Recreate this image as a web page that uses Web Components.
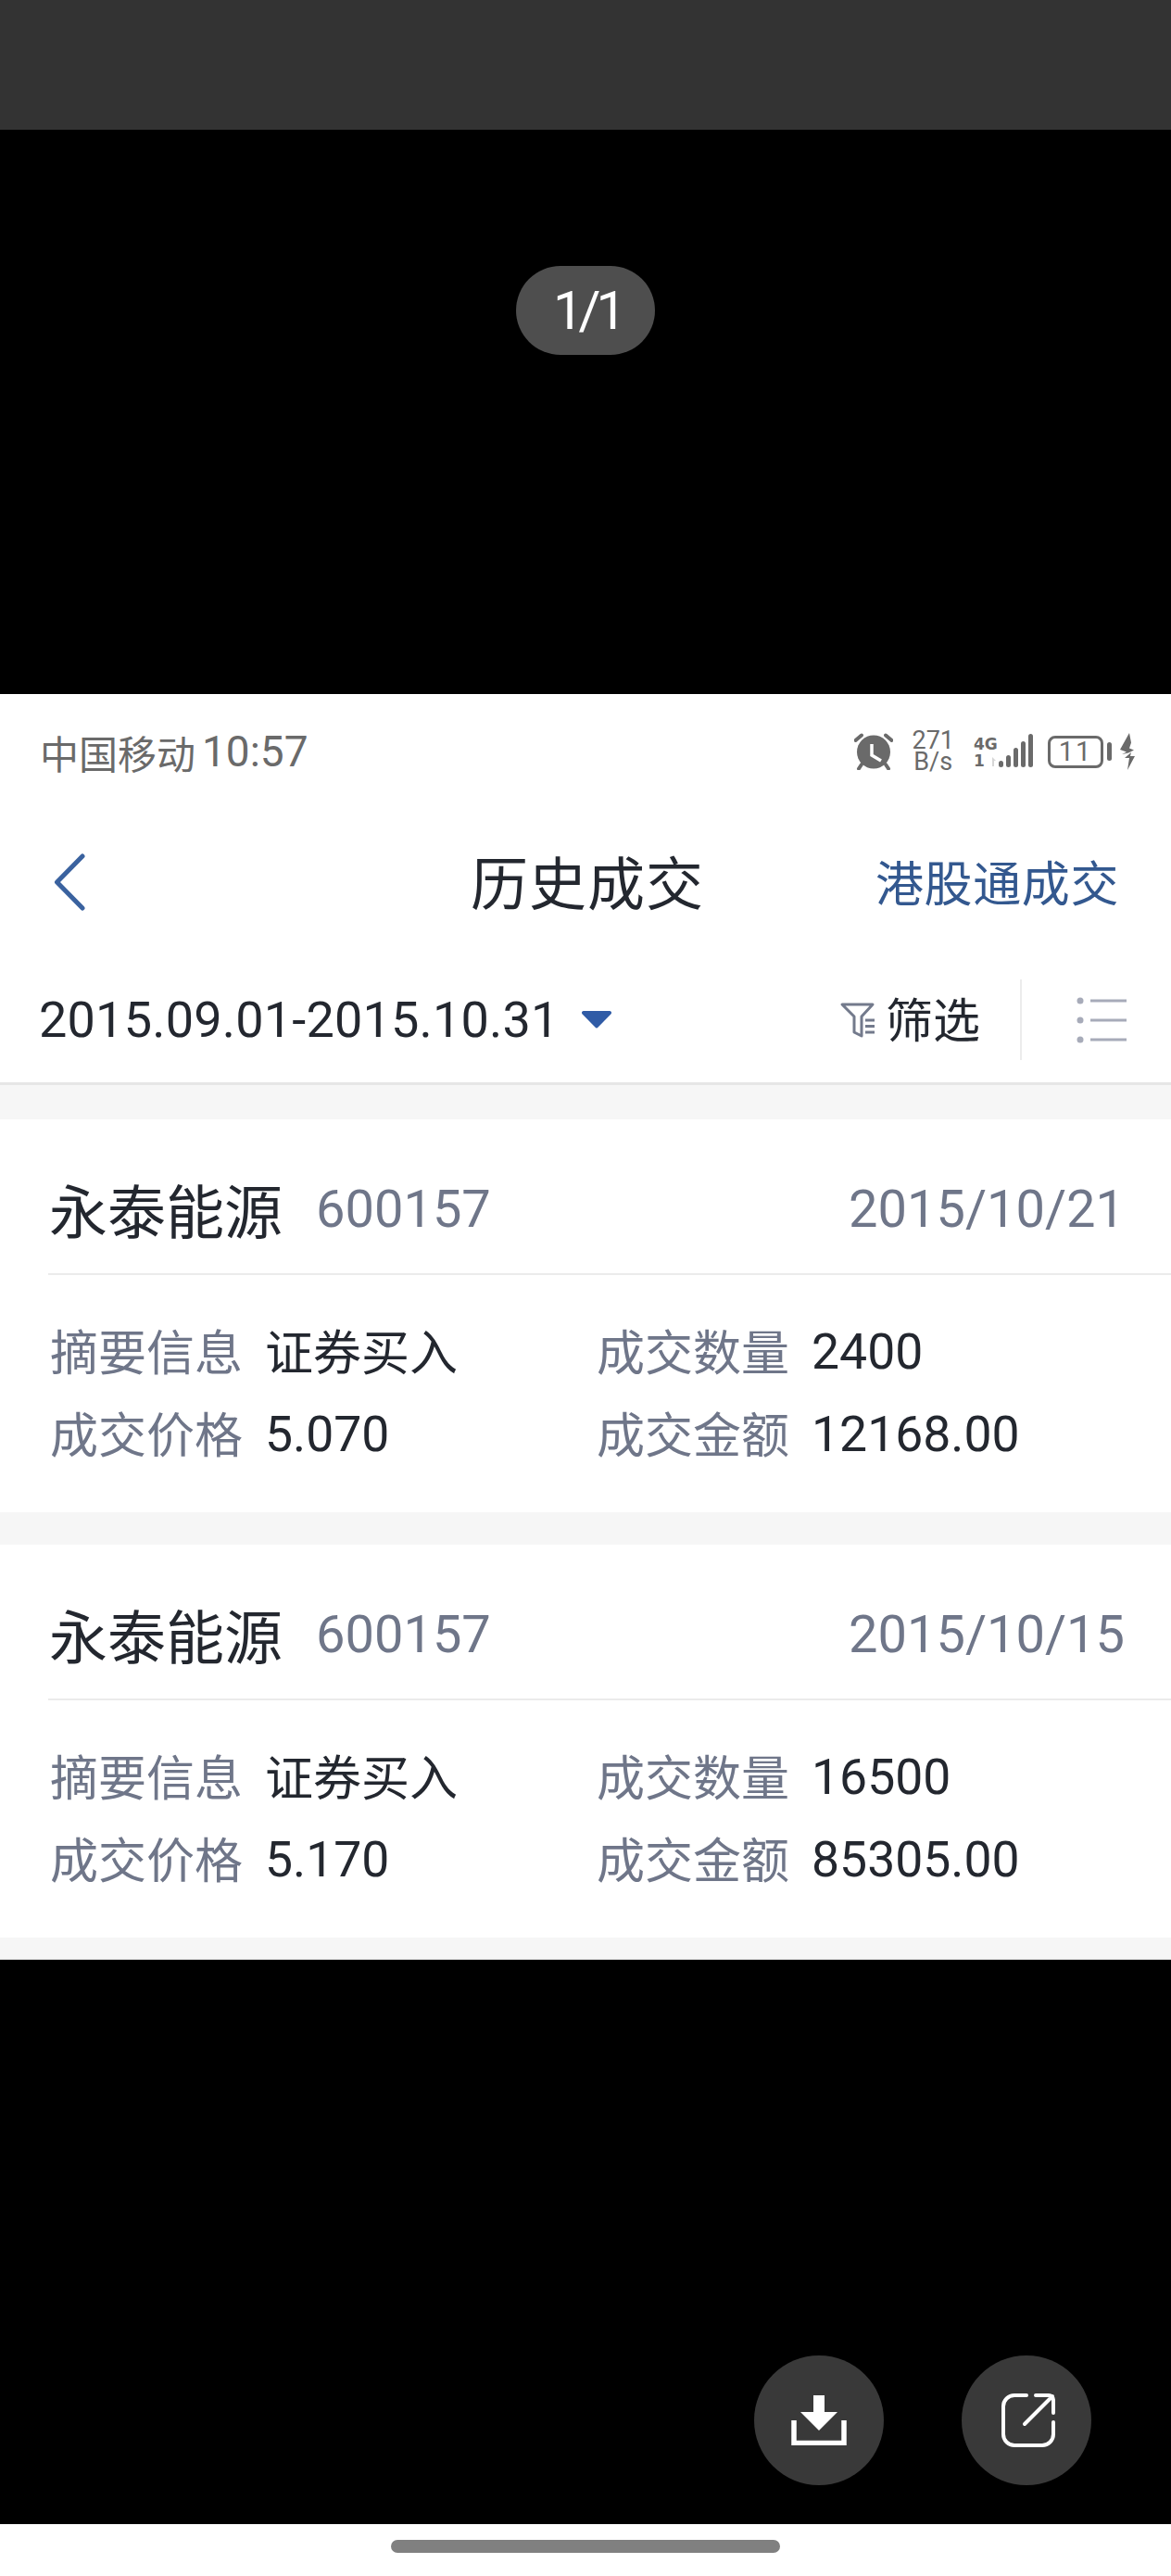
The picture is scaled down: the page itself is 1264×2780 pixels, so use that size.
<!DOCTYPE html>
<html lang="zh">
<head>
<meta charset="utf-8">
<title>历史成交</title>
<style>
    html, body { margin:0; padding:0; background:#000; }
    body { width:1264px; height:2780px; overflow:hidden; font-family:Roboto, "Noto Sans CJK SC", sans-serif; }
</style>
</head>
<body>
<photo-viewer>
    <page-badge slot="top">1/1</page-badge>
    <status-bar slot="shot"></status-bar>
    <nav-bar slot="shot" title="历史成交" action="港股通成交"></nav-bar>
    <filter-bar slot="shot" range="2015.09.01-2015.10.31"></filter-bar>
    <trade-card slot="shot" style="margin-top:37px" name="永泰能源" code="600157" date="2015/10/21" summary="证券买入" qty="2400" price="5.070" amount="12168.00"></trade-card>
    <trade-card slot="shot" style="margin-top:35px" name="永泰能源" code="600157" date="2015/10/15" summary="证券买入" qty="16500" price="5.170" amount="85305.00"></trade-card>
    <round-button slot="actions" icon="download"></round-button>
    <round-button slot="actions" icon="share"></round-button>
</photo-viewer>

<script>
const FONT = 'Roboto, "Noto Sans CJK SC", sans-serif';

class PhotoViewer extends HTMLElement {
    constructor() {
        super();
        this.attachShadow({ mode: "open" }).innerHTML = `
<style>
    :host { display:flex; flex-direction:column; width:1264px; height:2780px; background:#000; font-family:${FONT}; }
    .strip { height:140px; background:#333; }
    .top { height:609px; display:flex; justify-content:center; align-items:flex-start; padding-top:147px; box-sizing:border-box; }
    .shot { height:1366px; background:#f6f6f6; border-bottom:1px solid #ddd; box-sizing:border-box; display:flex; flex-direction:column; }
    .bottom { height:609px; display:flex; justify-content:flex-end; gap:84px; padding:427px 86px 0 0; box-sizing:border-box; }
    .home { flex:1; background:#fff; display:flex; justify-content:center; padding-top:17px; }
    .home i { display:block; width:420px; height:14px; border-radius:7px; background:#808080; }
</style>
<div class="strip"></div>
<div class="top"><slot name="top"></slot></div>
<div class="shot"><slot name="shot"></slot></div>
<div class="bottom"><slot name="actions"></slot></div>
<div class="home"><i></i></div>`;
    }
}

class PageBadge extends HTMLElement {
    constructor() {
        super();
        this.attachShadow({ mode: "open" }).innerHTML = `
<style>
    :host { display:flex; align-items:center; justify-content:center; width:150px; height:96px; padding-left:4px; box-sizing:border-box; border-radius:48px; background:#4e4e4e; color:#fff; font-size:58px; letter-spacing:-5px; }
</style>
<slot></slot>`;
    }
}

class StatusBar extends HTMLElement {
    constructor() {
        super();
        this.attachShadow({ mode: "open" }).innerHTML = `
<style>
    :host { display:flex; align-items:center; justify-content:space-between; height:124px; padding:0 38px 0 43px; box-sizing:border-box; background:#fff; color:#6a6a6a; }
    .left { font-size:42px; display:flex; align-items:center; gap:7px; }
    .left b { font-weight:400; font-size:46px; }
    .right { display:flex; align-items:center; height:48px; }
    .speed { width:min-content; text-align:center; font-size:27px; line-height:23px; margin:0 21px 0 20px; }
    .net { display:flex; flex-direction:column; font-family:"DejaVu Sans", sans-serif; font-weight:700; line-height:18px; font-size:17px; width:22px; margin-top:2px; }
    .batt { display:flex; align-items:center; justify-content:center; width:60px; height:35px; margin-left:16px; border:3px solid #6a6a6a; border-radius:8px; box-sizing:border-box; font-size:29px; letter-spacing:2px; }
</style>
<div class="left">中国移动<b>10:57</b></div>
<div class="right">
    <svg width="42" height="40" viewBox="0 0 42 40">
        <circle cx="21" cy="20.500" r="18" fill="#6a6a6a"/>
        <path d="M1.500 8 8 2.500M40.500 8 34 2.500M8 34l-3 4.500M34 34l3 4.500" stroke="#6a6a6a" stroke-width="4" stroke-linecap="round"/>
        <path d="M19 12v12l10 6" fill="none" stroke="#fff" stroke-width="3.500"/>
    </svg>
    <div class="speed">271 B/s</div>
    <div class="net"><span>4G</span><span>1</span></div>
    <svg width="44" height="38" viewBox="0 0 44 38" style="margin-left:-2px">
        <path d="M0 25l4 4h-2v6H0z" fill="#d6d6d6"/>
        <g fill="#6a6a6a">
            <rect x="7" y="29" width="5" height="7" rx="2.500"/>
            <rect x="15" y="23" width="5" height="13" rx="2.500"/>
            <rect x="23" y="15" width="5" height="21" rx="2.500"/>
            <rect x="31" y="8" width="5" height="28" rx="2.500"/>
            <rect x="39" y="0" width="5" height="36" rx="2.500"/>
        </g>
    </svg>
    <div class="batt">11</div>
    <svg width="6" height="20" viewBox="0 0 6 20" style="margin-left:4px"><rect width="5" height="20" rx="2.500" fill="#6a6a6a"/></svg>
    <svg width="18" height="40" viewBox="0 0 18 40" style="margin-left:7px">
        <path d="M11 0 1 18l7 2.500L3 23l7-1.500 6-3-5-2 2-6zM13 21 6 27h5l-2 13 8-15h-5z" fill="#6a6a6a"/>
    </svg>
</div>`;
    }
}

class NavBar extends HTMLElement {
    constructor() {
        super();
        const root = this.attachShadow({ mode: "open" });
        root.innerHTML = `
<style>
    :host { display:grid; grid-template-columns:1fr auto 1fr; align-items:center; height:160px; padding:0 56px 0 58px; box-sizing:border-box; background:#fff; }
    svg { display:block; margin-top:-2px; }
    h1 { margin:-6px 0 0 2px; font-size:62px; font-weight:400; color:#23272f; letter-spacing:1px; }
    .action { justify-self:end; margin-top:-6px; font-size:52px; letter-spacing:.6px; color:#33588f; }
</style>
<svg width="34" height="62" viewBox="0 0 34 62"><path d="M31 3 3.500 31 31 59" fill="none" stroke="#3a629f" stroke-width="5" stroke-linecap="round" stroke-linejoin="round"/></svg>
<h1></h1>
<div class="action"></div>`;
        root.querySelector("h1").textContent = this.getAttribute("title");
        root.querySelector(".action").textContent = this.getAttribute("action");
    }
}

class FilterBar extends HTMLElement {
    constructor() {
        super();
        const root = this.attachShadow({ mode: "open" });
        root.innerHTML = `
<style>
    :host { display:flex; align-items:center; height:138px; padding:0 48px 0 42px; box-sizing:border-box; background:#fff; border-bottom:3px solid #e6e6e6; color:#23272f; }
    .range { font-size:54px; letter-spacing:.2px; }
    .caret { margin-left:23px; margin-top:-2px; }
    .filter { display:flex; align-items:center; gap:11px; margin-left:auto; font-size:51px; }
    .filter span { margin-top:-6px; }
    .sep { width:2px; height:87px; background:#ececec; margin:0 59px 0 43px; }
    svg { display:block; }
</style>
<span class="range"></span>
<svg class="caret" width="34" height="20" viewBox="0 0 34 20"><path d="M3 1h28a2 2 0 0 1 1.600 3.200L18.600 18.600a2.200 2.200 0 0 1-3.200 0L1.400 4.200A2 2 0 0 1 3 1z" fill="#2f5ba6"/></svg>
<div class="filter">
    <svg width="39" height="40" viewBox="0 0 39 40">
        <path d="M3 3H36L24 16V37L16 33V16z" fill="none" stroke="#737a8c" stroke-width="3" stroke-linejoin="round"/>
        <path d="M28 20h10M28 26.500h10M28 33h10" stroke="#737a8c" stroke-width="3"/>
    </svg>
    <span>筛选</span>
</div>
<div class="sep"></div>
<svg width="54" height="50" viewBox="0 0 54 50">
    <g fill="#a7abb9"><circle cx="4" cy="4" r="3.500"/><circle cx="4" cy="25" r="3.500"/><circle cx="4" cy="46" r="3.500"/></g>
    <path d="M15 4h39M15 25h39M15 46h39" stroke="#a7abb9" stroke-width="3"/>
</svg>`;
        root.querySelector(".range").textContent = this.getAttribute("range");
    }
}

const tradeTemplate = document.createElement("template");
tradeTemplate.innerHTML = `
<style>
    :host { display:block; height:424px; background:#fff; padding-left:52px; box-sizing:border-box; }
    .head { display:flex; align-items:center; height:168px; padding:26px 50px 0 1px; box-sizing:border-box; border-bottom:2px solid #ebebeb; }
    .name { font-size:63px; color:#23272f; margin-top:-2px; }
    .code { font-size:56px; color:#6f7689; margin:2px 0 0 36px; }
    .date { font-size:56px; color:#6f7689; margin:2px 0 0 auto; }
    .grid { display:grid; grid-template-columns:590px 1fr; grid-auto-rows:89px; padding:36px 0 0 2px; align-items:center; }
    .cell { display:flex; align-items:center; gap:24px; font-size:52px; color:#23272f; }
    .cell span { color:#6f7689; }
    .num { font-size:53.500px; padding-top:3px; }
</style>
<div class="head"><span class="name"></span><span class="code"></span><span class="date"></span></div>
<div class="grid">
    <div class="cell"><span>摘要信息</span><div class="summary"></div></div>
    <div class="cell"><span>成交数量</span><div class="num qty"></div></div>
    <div class="cell"><span>成交价格</span><div class="num price"></div></div>
    <div class="cell"><span>成交金额</span><div class="num amount"></div></div>
</div>`;

class TradeCard extends HTMLElement {
    constructor() {
        super();
        const root = this.attachShadow({ mode: "open" });
        root.appendChild(tradeTemplate.content.cloneNode(true));
        for (const key of ["name", "code", "date", "summary", "qty", "price", "amount"]) {
            root.querySelector("." + key).textContent = this.getAttribute(key);
        }
    }
}

const ICONS = {
    download: `<svg width="60" height="54" viewBox="0 0 60 54"><path d="M24 0h12v18h14L30 38 10 18h14z" fill="#fff"/><path d="M3 27v24.500h54V27" fill="none" stroke="#fff" stroke-width="5.500"/></svg>`,
    share: `<svg style="margin-left:3px" width="60" height="60" viewBox="0 0 60 60" fill="none" stroke="#fff" stroke-width="4" stroke-linecap="round" stroke-linejoin="round"><path d="M28 3H15A12 12 0 0 0 3 15v30a12 12 0 0 0 12 12h30a12 12 0 0 0 12-12V32"/><path d="M26 34 56 4M38 3h14a5 5 0 0 1 5 5v14"/></svg>`
};

class RoundButton extends HTMLElement {
    constructor() {
        super();
        this.attachShadow({ mode: "open" }).innerHTML = `
<style>
    :host { display:flex; align-items:center; justify-content:center; width:140px; height:140px; border-radius:50%; background:#393939; }
</style>
${ICONS[this.getAttribute("icon")] || ""}`;
    }
}

customElements.define("photo-viewer", PhotoViewer);
customElements.define("page-badge", PageBadge);
customElements.define("status-bar", StatusBar);
customElements.define("nav-bar", NavBar);
customElements.define("filter-bar", FilterBar);
customElements.define("trade-card", TradeCard);
customElements.define("round-button", RoundButton);
</script>
</body>
</html>
